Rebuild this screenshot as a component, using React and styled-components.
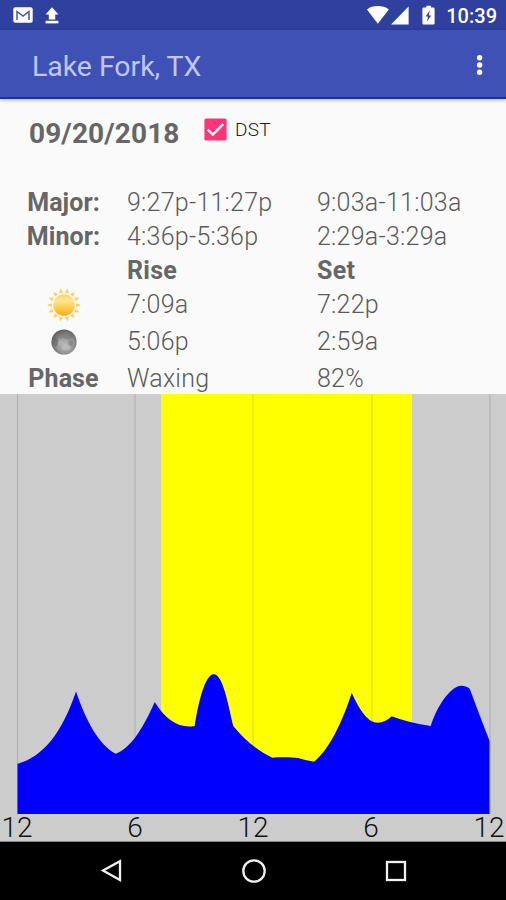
import React from 'react';
import styled, { createGlobalStyle } from 'styled-components';

const solunar = [
  { label: 'Major:', first: '9:27p-11:27p', second: '9:03a-11:03a' },
  { label: 'Minor:', first: '4:36p-5:36p', second: '2:29a-3:29a' },
  { label: '', first: 'Rise', second: 'Set', bold: true },
  { icon: 'sun', first: '7:09a', second: '7:22p' },
  { icon: 'moon', first: '5:06p', second: '2:59a' },
  { label: 'Phase', first: 'Waxing', second: '82%' },
];

const hours = ['12', '6', '12', '6', '12'];
const gridLines = [17.5, 135, 253, 372, 490];

export default function App() {
  return (
    <>
      <GlobalStyle />
      <Screen>
        <StatusBar>
          <StatusGroup>
            <MailIcon />
            <UploadIcon />
          </StatusGroup>
          <StatusGroup $tight>
            <SignalIcons />
            <Clock>10:39</Clock>
          </StatusGroup>
        </StatusBar>
        <AppBar>
          <Title>Lake Fork, TX</Title>
          <MenuButton aria-label="More options">
            <svg width="10" height="24" viewBox="0 0 10 24" fill="#fff">
              <circle cx="4.6" cy="3.7" r="2.7" />
              <circle cx="4.6" cy="11" r="2.7" />
              <circle cx="4.6" cy="18.3" r="2.7" />
            </svg>
          </MenuButton>
        </AppBar>
        <Content>
          <DateRow>
            <DateText>09/20/2018</DateText>
            <DstLabel>
              <CheckIcon />
              <span>DST</span>
            </DstLabel>
          </DateRow>
          <Table>
            {solunar.map((row, i) => (
              <React.Fragment key={i}>
                <LabelCell>
                  {row.icon === 'sun' && <SunIcon />}
                  {row.icon === 'moon' && <MoonIcon />}
                  {row.label}
                </LabelCell>
                <Cell $bold={row.bold}>{row.first}</Cell>
                <Cell $bold={row.bold}>{row.second}</Cell>
              </React.Fragment>
            ))}
          </Table>
        </Content>
        <ChartPanel>
          <ActivityChart />
          <HourAxis>
            {hours.map((hour, i) => (
              <Hour key={i}>{hour}</Hour>
            ))}
          </HourAxis>
        </ChartPanel>
        <NavBar>
          <NavButton aria-label="Back">
            <svg width="26" height="26" viewBox="0 0 26 26">
              <path d="M21 3.2V22L4 12.6Z" />
            </svg>
          </NavButton>
          <NavButton aria-label="Home">
            <svg width="26" height="26" viewBox="0 0 26 26">
              <circle cx="13" cy="13" r="10.7" />
            </svg>
          </NavButton>
          <NavButton aria-label="Recent apps">
            <svg width="26" height="26" viewBox="0 0 26 26">
              <rect x="4" y="4" width="18" height="18" />
            </svg>
          </NavButton>
        </NavBar>
      </Screen>
    </>
  );
}

function MailIcon() {
  return (
    <svg width="20" height="16" viewBox="0 0 20 16">
      <rect x="0.3" y="0.3" width="19.4" height="15.4" rx="2" fill="#fff" />
      <path d="M4 13V4.4L10 9L16 4.4V13" fill="none" stroke="#4a58aa" strokeWidth="1.5" />
    </svg>
  );
}

function UploadIcon() {
  return (
    <svg width="14" height="17" viewBox="0 0 14 17" fill="#fff">
      <path d="M7 0.2L13.4 7.4H10.2V12.6H3.8V7.4H0.6Z" />
      <rect x="0.6" y="13.8" width="12.8" height="2.6" />
    </svg>
  );
}

function SignalIcons() {
  return (
    <svg width="70" height="20" viewBox="0 0 70 20" fill="#fff">
      <path d="M1 4.4C6.6 0 17 0 22.8 4.4L11.8 18.8Z" />
      <path d="M42.6 1.4V19.4H25Z" />
      <path d="M60.4 0.8H65V2.6H67.2Q68.6 2.6 68.6 4V18.2Q68.6 19.4 67.2 19.4H57.8Q56.4 19.4 56.4 18.2V4Q56.4 2.6 57.8 2.6H60.4Z" />
      <path d="M63.8 5.6L59.6 11.4H62L61 16.4L65.2 10.4H62.8Z" fill="#30409f" />
    </svg>
  );
}

function CheckIcon() {
  return (
    <svg width="23" height="23" viewBox="0 0 23 23">
      <rect x="0.4" y="0.4" width="22.2" height="22.2" rx="1.6" fill="#ff3579" />
      <path d="M3.8 11.6L8.8 16.6L19.2 6.2" fill="none" stroke="#fff" strokeWidth="2.4" />
    </svg>
  );
}

function SunIcon() {
  const rays = Array.from({ length: 14 }, (_, i) => ((i + 0.5) * 360) / 14);
  return (
    <svg width="34" height="36" viewBox="-17 -18 34 36">
      <defs>
        <linearGradient id="sun" x1="0" y1="0" x2="0" y2="1">
          <stop offset="0" stopColor="#fbd660" />
          <stop offset="0.3" stopColor="#fde794" />
          <stop offset="0.65" stopColor="#fdcc40" />
          <stop offset="1" stopColor="#f6ae22" />
        </linearGradient>
      </defs>
      {rays.map((angle) => (
        <path key={angle} d="M-2.1 -12.2L0 -17L2.1 -12.2Z" fill="#fbd062" transform={`rotate(${angle})`} />
      ))}
      <circle r="10.8" fill="url(#sun)" />
    </svg>
  );
}

function MoonIcon() {
  return (
    <svg width="26" height="26" viewBox="0 0 26 26">
      <defs>
        <radialGradient id="moon" cx="0.55" cy="0.6" r="0.55">
          <stop offset="0" stopColor="#b8b8b8" />
          <stop offset="0.6" stopColor="#989898" />
          <stop offset="1" stopColor="#646464" />
        </radialGradient>
      </defs>
      <circle cx="13" cy="13" r="12.6" fill="url(#moon)" />
      <ellipse cx="9" cy="7" rx="4.5" ry="2.6" fill="#757575" opacity="0.5" />
      <ellipse cx="17" cy="7.5" rx="4.4" ry="3" fill="#707070" opacity="0.5" />
      <ellipse cx="4.6" cy="13" rx="2.6" ry="4" fill="#606060" opacity="0.5" />
      <ellipse cx="19.5" cy="14" rx="2.4" ry="3" fill="#787878" opacity="0.5" />
      <ellipse cx="15" cy="18.5" rx="4.6" ry="3" fill="#c8c8c8" opacity="0.5" />
      <ellipse cx="9.6" cy="14" rx="2.8" ry="2.6" fill="#bebebe" opacity="0.5" />
    </svg>
  );
}

function ActivityChart() {
  return (
    <Chart viewBox="0 394 506 420">
      <rect x="161" y="394" width="251" height="420" fill="#ff0" />
      {gridLines.map((x) => (
        <line key={x} x1={x} x2={x} y1="394" y2="814" stroke="#000" strokeOpacity="0.14" />
      ))}
      <path
        fill="#00f"
        d="M17.5 814V763.7C43 757 62 733 76 691.5C86 721 99 745 115.7 753.7
          C132 748 145 724 154.7 702Q172 730 194.7 726
          C198 704 205 674.3 213.7 674.3C223 674.3 228 704 233.3 726
          Q251 748 272.3 757.7C280 757 292 757.2 298 758Q306 760.5 314 761.7
          C330 749 343 720 351.7 692.7C360 711 368 722.7 378 722.7
          Q385 722.7 391.7 716.3Q409 723 430.7 726
          C438 703 452 685.7 461.3 685.7Q467 686 469.7 688.7
          Q479 714 489.5 740.7V814Z"
      />
    </Chart>
  );
}

const GlobalStyle = createGlobalStyle`
  * {
    box-sizing: border-box;
  }
  body {
    margin: 0;
    font-family: Roboto, sans-serif;
  }
`;
const Screen = styled.main`
  display: flex;
  flex-direction: column;
  width: 506px;
  height: 900px;
  overflow: hidden;
  background: #fafafa;
`;
const StatusBar = styled.header`
  display: flex;
  justify-content: space-between;
  align-items: center;
  height: 30px;
  padding: 0 9px 0 13px;
  background: #30409f;
`;
const StatusGroup = styled.div`
  display: flex;
  align-items: center;
  gap: ${({ $tight }) => ($tight ? '10px' : '12px')};
`;
const Clock = styled.span`
  font-size: 20px;
  font-weight: 500;
  line-height: 30px;
  padding-top: 2px;
  color: #fff;
`;
const AppBar = styled.header`
  display: flex;
  justify-content: space-between;
  align-items: center;
  flex: none;
  height: 69px;
  padding: 4px 21px 0 32px;
  background: #3f51b5;
  border-bottom: 2px solid #1233a4;
  box-shadow: 0 1px 4px rgba(0, 0, 0, 0.3);
`;
const Title = styled.h1`
  margin: 0;
  padding-top: 1px;
  font-size: 28.5px;
  font-weight: 400;
  letter-spacing: -0.05px;
  color: #c0c8f0;
`;
const MenuButton = styled.button`
  display: flex;
  padding: 0;
  border: 0;
  background: none;
`;
const Content = styled.section`
  flex: none;
  height: 295px;
  color: #666;
`;
const DateRow = styled.div`
  display: flex;
  height: 87px;
  padding: 18px 0 0 29px;
`;
const DateText = styled.div`
  width: 175px;
  font-size: 28px;
  font-weight: 700;
  line-height: 33px;
  letter-spacing: 0.12px;
`;
const DstLabel = styled.label`
  display: flex;
  align-items: center;
  gap: 8px;
  height: 25px;
  font-size: 19px;
  font-weight: 300;
  letter-spacing: 0.3px;
  color: #222;
`;
const Table = styled.div`
  display: grid;
  grid-template-columns: 127px 190px 1fr;
  grid-template-rows: 34px 34px 34px 34px 39px 35px;
  align-items: center;
  font-size: 25px;
  line-height: 30px;
`;
const LabelCell = styled.div`
  display: flex;
  justify-content: center;
  font-weight: 700;
  letter-spacing: 0.1px;
`;
const Cell = styled.div`
  font-weight: ${({ $bold }) => ($bold ? 700 : 300)};
  letter-spacing: 0.25px;
  color: ${({ $bold }) => ($bold ? '#666' : '#5a5a5a')};
`;
const ChartPanel = styled.section`
  flex: none;
  height: 448px;
  background: #ccc;
  border-bottom: 1px solid #888;
`;
const Chart = styled.svg`
  display: block;
  width: 506px;
  height: 420px;
`;
const HourAxis = styled.div`
  display: flex;
  justify-content: space-between;
  margin: 0 -1px;
`;
const Hour = styled.span`
  width: 36px;
  font-size: 28px;
  font-weight: 300;
  line-height: 27px;
  text-align: center;
  color: #111;
`;
const NavBar = styled.nav`
  display: flex;
  justify-content: space-between;
  align-items: center;
  height: 58px;
  padding: 0 97px 0 99px;
  background: #000;
`;
const NavButton = styled.button`
  display: flex;
  padding: 0;
  border: 0;
  background: none;
  fill: none;
  stroke: #f0f0f0;
  stroke-width: 2.3;
`;
